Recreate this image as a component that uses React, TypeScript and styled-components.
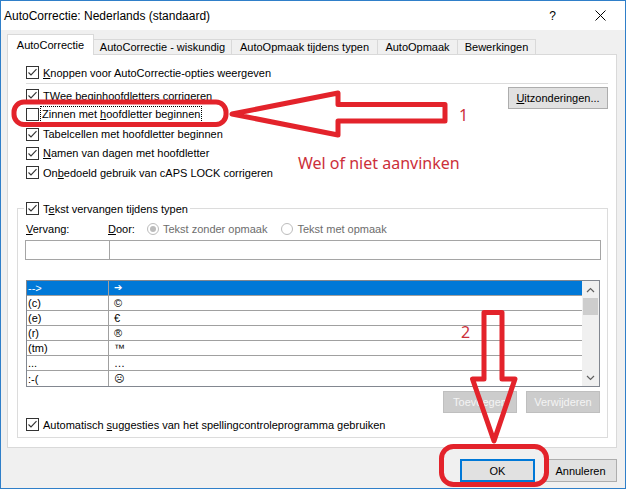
import React from "react";
import styled, { createGlobalStyle } from "styled-components";

const GlobalStyle = createGlobalStyle`
  * { box-sizing: border-box; }
  html, body { margin: 0; padding: 0; background: #ffffff; }
  body {
    font-family: "Liberation Sans", Arial, "DejaVu Sans", sans-serif;
    font-size: 11px;
    color: #000;
  }
`;

const Window = styled.div`
  position: relative;
  width: 626px;
  height: 489px;
  border: 1px solid #2f7fc9;
  background: #f0f0f0;
  display: flex;
  flex-direction: column;
  overflow: hidden;
`;

const TitleBar = styled.div`
  height: 29px;
  flex-shrink: 0;
  background: #ffffff;
  display: flex;
  align-items: center;
  padding-left: 3px;
`;

const Title = styled.div`
  flex: 1;
  font-size: 12px;
`;

const CaptionButton = styled.div<{ $w: number }>`
  width: ${(p) => p.$w}px;
  height: 29px;
  display: flex;
  align-items: center;
  justify-content: center;
  font-size: 12px;
`;

const Body = styled.div`
  flex: 1;
  display: flex;
  flex-direction: column;
  padding: 4px 8px 0 6px;
`;

const TabStrip = styled.div`
  display: flex;
  align-items: flex-end;
  height: 21px;
  margin-bottom: -1px;
  position: relative;
  z-index: 1;
`;

const Tab = styled.div<{ $w: number; $active?: boolean }>`
  width: ${(p) => p.$w}px;
  height: ${(p) => (p.$active ? 21 : 15)}px;
  margin-bottom: ${(p) => (p.$active ? 0 : 1)}px;
  border: 1px solid #d9d9d9;
  border-bottom: none;
  background: ${(p) => (p.$active ? "#ffffff" : "#f0f0f0")};
  display: flex;
  align-items: center;
  justify-content: center;
  white-space: nowrap;
  & + & {
    margin-left: -1px;
  }
`;

const Panel = styled.div`
  height: 394px;
  flex-shrink: 0;
  background: #ffffff;
  border: 1px solid #d9d9d9;
  display: flex;
  flex-direction: column;
  padding: 8px 8px 0 9px;
`;

const CheckRow = styled.div<{ $indent?: number; $top?: number }>`
  display: flex;
  align-items: center;
  gap: 4px;
  height: 19.2px;
  margin-left: ${(p) => p.$indent ?? 0}px;
  margin-top: ${(p) => p.$top ?? 0}px;
  white-space: nowrap;
`;

const Box = styled.span`
  width: 13px;
  height: 13px;
  flex-shrink: 0;
  border: 1px solid #333333;
  background: #ffffff;
  display: flex;
  align-items: center;
  justify-content: center;
`;

const Focused = styled.span`
  outline: 1px dotted #000;
  padding: 1px 1px 2px 1px;
  margin-left: -2px;
`;

const Separator = styled.div`
  height: 1px;
  background: #dcdcdc;
  margin: 1px 0 0 9px;
`;

const Options = styled.div`
  display: flex;
  justify-content: space-between;
  align-items: flex-start;
  margin-top: 2px;
  padding-left: 9px;
`;

const OptionList = styled.div`
  display: flex;
  flex-direction: column;
`;

const Button = styled.div<{ $w: number; $h?: number; $default?: boolean; $disabled?: boolean }>`
  width: ${(p) => p.$w}px;
  height: ${(p) => p.$h ?? 22}px;
  flex-shrink: 0;
  display: flex;
  align-items: center;
  justify-content: center;
  background: ${(p) => (p.$disabled ? "#cccccc" : "#e1e1e1")};
  border: 1px solid ${(p) => (p.$default ? "#0078d7" : p.$disabled ? "#bfbfbf" : "#adadad")};
  box-shadow: ${(p) => (p.$default ? "inset 0 0 0 1px #0078d7" : "none")};
  color: ${(p) => (p.$disabled ? "#f4f4f4" : "#000")};
`;

const SideButton = styled(Button)`
  margin-top: 1px;
`;

const Group = styled.fieldset`
  margin: 17px 0 0 0;
  padding: 0 6px 2px 8px;
  border: 1px solid #dcdcdc;
  min-width: 0;
`;

const GroupLegend = styled.legend`
  padding: 0 2px;
  margin-left: -2px;
`;

const LabelRow = styled.div`
  display: flex;
  align-items: center;
  height: 16px;
  margin-top: 3px;
  white-space: nowrap;
`;

const FieldLabel = styled.span<{ $w?: number }>`
  width: ${(p) => (p.$w ? `${p.$w}px` : "auto")};
  margin-right: ${(p) => (p.$w ? 0 : 12)}px;
`;

const RadioOption = styled.span`
  display: flex;
  align-items: center;
  gap: 4px;
  color: #6d6d6d;
  & + & {
    margin-left: 14px;
  }
`;

const RadioCircle = styled.span<{ $on?: boolean }>`
  width: 12px;
  height: 12px;
  border-radius: 50%;
  border: 1px solid #bcbcbc;
  background: #fff;
  display: flex;
  align-items: center;
  justify-content: center;
  &::after {
    content: "";
    display: ${(p) => (p.$on ? "block" : "none")};
    width: 6px;
    height: 6px;
    border-radius: 50%;
    background: #bcbcbc;
  }
`;

const InputRow = styled.div`
  display: flex;
  margin: 3px 0 0 -1px;
`;

const TextInput = styled.div<{ $w?: number }>`
  height: 20px;
  border: 1px solid #a5a5a5;
  background: #fff;
  ${(p) => (p.$w ? `width: ${p.$w}px; flex-shrink: 0;` : "flex: 1;")}
  & + & {
    margin-left: -1px;
  }
`;

const Table = styled.div`
  display: flex;
  height: 107px;
  margin: 20px 1px 0 0;
  border: 1px solid #828790;
  background: #fff;
`;

const Rows = styled.div`
  flex: 1;
  display: flex;
  flex-direction: column;
`;

const Row = styled.div<{ $selected?: boolean }>`
  display: flex;
  height: 15px;
  flex-shrink: 0;
  border-bottom: 1px solid #a0a0a0;
  background: ${(p) => (p.$selected ? "#0078d7" : "transparent")};
  color: ${(p) => (p.$selected ? "#fff" : "#000")};
  &:last-child {
    border-bottom: none;
  }
`;

const Cell = styled.div<{ $first?: boolean }>`
  display: flex;
  align-items: center;
  line-height: 14px;
  ${(p) =>
    p.$first
      ? "width: 82px; padding-left: 1px; border-right: 1px solid #a0a0a0;"
      : "flex: 1; padding-left: 5px;"}
`;

const Symbol = styled.span`
  font-family: "DejaVu Sans", sans-serif;
  font-size: 10px;
`;

const Scrollbar = styled.div`
  width: 17px;
  background: #f0f0f0;
  display: flex;
  flex-direction: column;
`;

const ScrollArrow = styled.div`
  height: 17px;
  display: flex;
  align-items: center;
  justify-content: center;
`;

const Thumb = styled.div`
  height: 17px;
  margin: 0 1px;
  background: #cdcdcd;
`;

const ScrollSpace = styled.div`
  flex: 1;
`;

const ActionRow = styled.div`
  display: flex;
  justify-content: flex-end;
  gap: 9px;
  margin: 4px 1px 0 0;
`;

const Footer = styled.div`
  display: flex;
  justify-content: flex-end;
  gap: 9px;
  margin-top: 11px;
`;

const Overlay = styled.svg`
  position: absolute;
  left: -1px;
  top: -1px;
  pointer-events: none;
  z-index: 5;
`;

const Note = styled.span<{ $x: number; $y: number }>`
  position: absolute;
  left: ${(p) => p.$x - 1}px;
  top: ${(p) => p.$y - 1}px;
  font-family: "Noto Sans", "Liberation Sans", sans-serif;
  font-size: 16px;
  line-height: 20px;
  color: #cc2f3a;
  white-space: nowrap;
  z-index: 6;
`;

const Check = ({ checked = true }: { checked?: boolean }) => (
  <Box>
    {checked && (
      <svg width="11" height="11" viewBox="0 0 11 11">
        <path d="M1.5 5.5 L4 8 L9.5 2.2" fill="none" stroke="#333" strokeWidth="1.1" />
      </svg>
    )}
  </Box>
);

const Chevron = ({ up }: { up?: boolean }) => (
  <svg width="9" height="6" viewBox="0 0 9 6">
    <path
      d={up ? "M1 5 L4.5 1.5 L8 5" : "M1 1 L4.5 4.5 L8 1"}
      fill="none"
      stroke="#606060"
      strokeWidth="1.2"
    />
  </svg>
);

const entries: [string, string][] = [
  ["-->", "\u2794"],
  ["(c)", "\u00a9"],
  ["(e)", "\u20ac"],
  ["(r)", "\u00ae"],
  ["(tm)", "\u2122"],
  ["...", "\u2026"],
  [":-(", "\u2639"],
];

export default function App() {
  return (
    <>
      <GlobalStyle />
      <Window>
        <TitleBar>
          <Title>AutoCorrectie: Nederlands (standaard)</Title>
          <CaptionButton $w={47}>?</CaptionButton>
          <CaptionButton $w={49}>
            <svg width="11" height="11" viewBox="0 0 11 11">
              <path d="M0.5 0.5 L10.5 10.5 M10.5 0.5 L0.5 10.5" stroke="#000" strokeWidth="1" />
            </svg>
          </CaptionButton>
        </TitleBar>
        <Body>
          <TabStrip>
            <Tab $w={87} $active>AutoCorrectie</Tab>
            <Tab $w={139}>AutoCorrectie - wiskundig</Tab>
            <Tab $w={147}>AutoOpmaak tijdens typen</Tab>
            <Tab $w={81}>AutoOpmaak</Tab>
            <Tab $w={79}>Bewerkingen</Tab>
          </TabStrip>
          <Panel>
            <CheckRow $indent={9}>
              <Check />
              <span>
                <u>K</u>noppen voor AutoCorrectie-opties weergeven
              </span>
            </CheckRow>
            <Separator />
            <Options>
              <OptionList>
                <CheckRow>
                  <Check />
                  <span>TWee beginhoofdletters corrigeren</span>
                </CheckRow>
                <CheckRow>
                  <Check checked={false} />
                  <Focused>
                    Zinnen met <u>h</u>oofdletter beginnen
                  </Focused>
                </CheckRow>
                <CheckRow>
                  <Check />
                  <span>Tabelcellen met hoofdletter beginnen</span>
                </CheckRow>
                <CheckRow>
                  <Check />
                  <span>
                    <u>N</u>amen van dagen met hoofdletter
                  </span>
                </CheckRow>
                <CheckRow>
                  <Check />
                  <span>
                    On<u>b</u>edoeld gebruik van cAPS LOCK corrigeren
                  </span>
                </CheckRow>
              </OptionList>
              <SideButton $w={100}>
                <span>
                  <u>U</u>itzonderingen...
                </span>
              </SideButton>
            </Options>
            <Group>
              <GroupLegend>
                <CheckRow>
                  <Check />
                  <span>
                    T<u>e</u>kst vervangen tijdens typen
                  </span>
                </CheckRow>
              </GroupLegend>
              <LabelRow>
                <FieldLabel $w={82}>
                  <u>V</u>ervang:
                </FieldLabel>
                <FieldLabel>
                  <u>D</u>oor:
                </FieldLabel>
                <RadioOption>
                  <RadioCircle $on />
                  Tekst zonder opmaak
                </RadioOption>
                <RadioOption>
                  <RadioCircle />
                  Tekst met opmaak
                </RadioOption>
              </LabelRow>
              <InputRow>
                <TextInput $w={85} />
                <TextInput />
              </InputRow>
              <Table>
                <Rows>
                  {entries.map(([from, to], i) => (
                    <Row key={from} $selected={i === 0}>
                      <Cell $first>{from}</Cell>
                      <Cell>{i === 0 || i === 6 ? <Symbol>{to}</Symbol> : to}</Cell>
                    </Row>
                  ))}
                </Rows>
                <Scrollbar>
                  <ScrollArrow>
                    <Chevron up />
                  </ScrollArrow>
                  <Thumb />
                  <ScrollSpace />
                  <ScrollArrow>
                    <Chevron />
                  </ScrollArrow>
                </Scrollbar>
              </Table>
              <ActionRow>
                <Button $w={74} $disabled>
                  Toevoegen
                </Button>
                <Button $w={74} $disabled>
                  Verwijderen
                </Button>
              </ActionRow>
              <CheckRow $top={2}>
                <Check />
                <span>
                  Automatisch <u>s</u>uggesties van het spellingcontroleprogramma gebruiken
                </span>
              </CheckRow>
            </Group>
          </Panel>
          <Footer>
            <Button $w={75} $h={23} $default>
              OK
            </Button>
            <Button $w={73} $h={23}>
              Annuleren
            </Button>
          </Footer>
        </Body>

        <Overlay width="626" height="489" viewBox="0 0 626 489">
          <g fill="none" stroke="#e3232b" strokeWidth="5" strokeLinejoin="round">
            <rect x="14" y="102" width="212" height="22.5" rx="10" />
            <path d="M232 114 L338 93 L338 104.5 L445 104.5 L445 121 L338 121 L338 135 Z" />
            <path d="M484 312.5 L502 312.5 L502 379 L515 379 L494 441 L472.5 379 L484 379 Z" />
            <rect x="441.5" y="446.5" width="105" height="38" rx="12" />
          </g>
        </Overlay>
        <Note $x={298} $y={153}>Wel of niet aanvinken</Note>
        <Note $x={459} $y={105}>1</Note>
        <Note $x={461} $y={322}>2</Note>
      </Window>
    </>
  );
}
